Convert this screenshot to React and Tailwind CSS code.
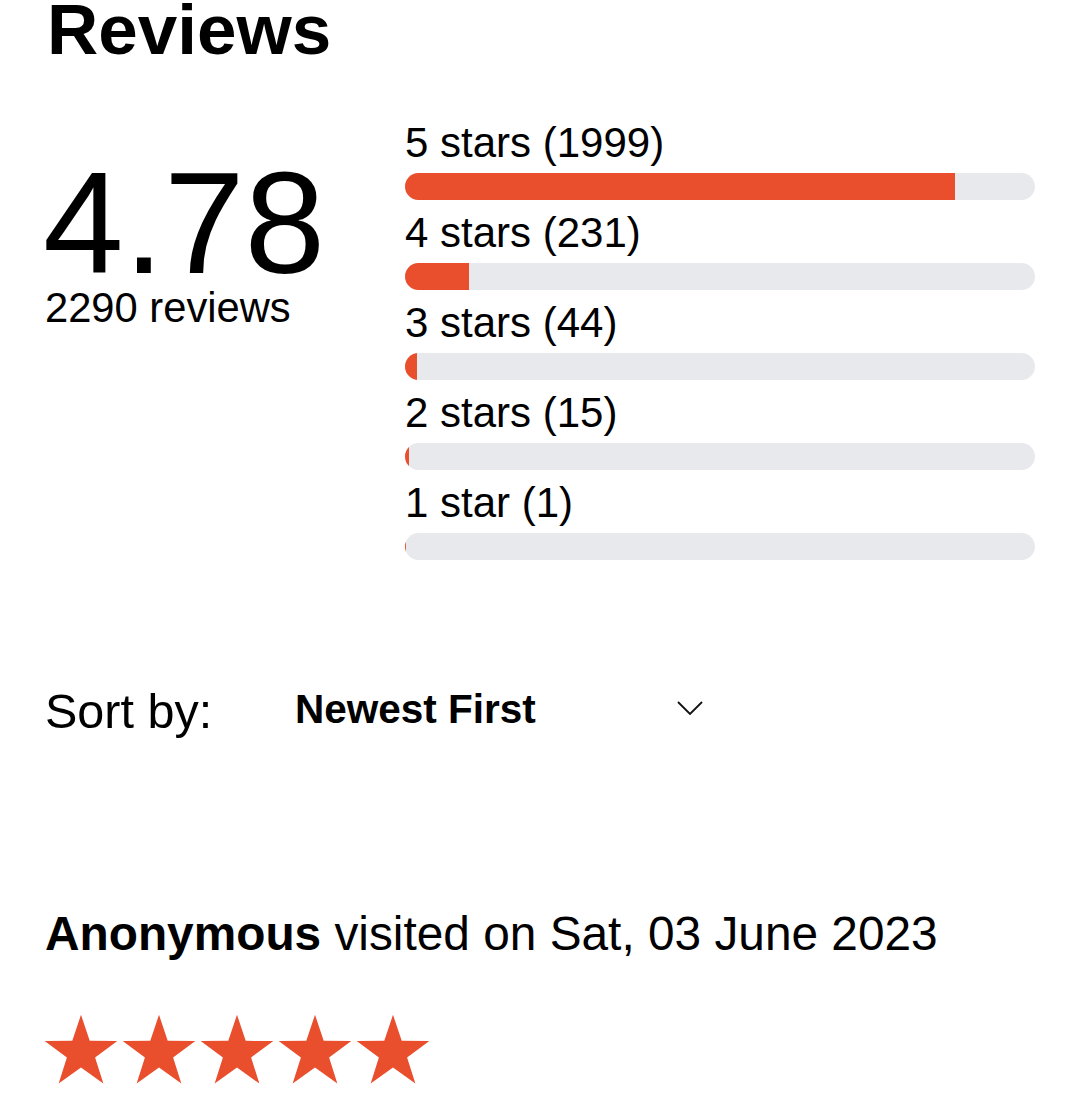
import { useMemo } from "react";

const ratings = [
  { label: "5 stars", count: 1999 },
  { label: "4 stars", count: 231 },
  { label: "3 stars", count: 44 },
  { label: "2 stars", count: 15 },
  { label: "1 star", count: 1 },
];

const TOTAL = 2290;

function Star() {
  // regular five point star, computed once
  const points = useMemo(() => {
    const R = 38;
    const r = R * 0.39;
    const cx = 36;
    const cy = 38.8;
    const pts = [];
    for (let i = 0; i < 10; i++) {
      const rad = i % 2 === 0 ? R : r;
      const a = (Math.PI / 5) * i - Math.PI / 2;
      pts.push(`${(cx + rad * Math.cos(a)).toFixed(2)},${(cy + rad * Math.sin(a)).toFixed(2)}`);
    }
    return pts.join(" ");
  }, []);

  return (
    <svg width="72" height="72" viewBox="0 0 72 72" className="shrink-0">
      <polygon points={points} fill="#e94e2d" />
    </svg>
  );
}

export default function App() {
  return (
    <div className="w-[1080px] min-h-[1118px] bg-white text-black px-[45px] pb-[30px] font-['Liberation_Sans',Arial,sans-serif]">

      {/* TITLE */}
      <h1 className="text-[71px] leading-[60px] font-bold ml-[2px]">Reviews</h1>

      {/* SUMMARY + BARS */}
      <div className="flex mt-[60px]">
        <div className="w-[360px] shrink-0 flex flex-col">
          <div className="text-[145px] leading-[120px] mt-[43px] -ml-[2px]">4.78</div>
          <div className="text-[41.7px] leading-[46px] mt-[2px]">2290 reviews</div>
        </div>

        <div className="flex-1 flex flex-col gap-[10px]">
          {ratings.map((r) => (
            <div key={r.label} className="flex flex-col">
              <div className="text-[42px] leading-[46px]">
                {r.label} ({r.count})
              </div>
              <div className="mt-[7px] h-[27px] w-full rounded-full bg-[#e7e9ec] overflow-hidden">
                <div
                  className="h-full bg-[#e94e2d]"
                  style={{ width: `${(r.count / TOTAL) * 100}%` }}
                ></div>
              </div>
            </div>
          ))}
        </div>
      </div>

      {/* SORT */}
      <div className="flex items-start mt-[124px]">
        <div className="w-[250px] shrink-0 text-[48.5px] leading-[54px]">Sort by:</div>
        <div className="w-[408px] flex justify-between items-start">
          <span className="text-[40.5px] leading-[46px] font-bold mt-[2px]">Newest First</span>
          <svg width="26" height="14" viewBox="0 0 26 14" className="mt-[17px]" fill="none">
            <path d="M1 1 L13 13 L25 1" stroke="#111" strokeWidth="1.8" />
          </svg>
        </div>
      </div>

      {/* REVIEW */}
      <div className="mt-[169px] text-[47.8px] leading-[54px]">
        <span className="font-bold">Anonymous</span> visited on Sat, 03 June 2023
      </div>

      <div className="flex gap-[6px] mt-[53px]">
        <Star />
        <Star />
        <Star />
        <Star />
        <Star />
      </div>
    </div>
  );
}
